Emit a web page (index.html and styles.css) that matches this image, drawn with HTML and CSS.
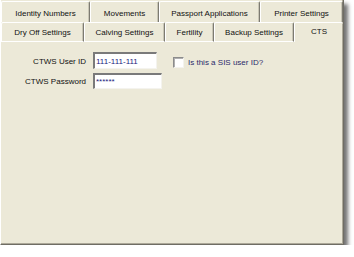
FILE: index.html
```html
<!DOCTYPE html>
<html lang="en">
<head>
    <meta charset="UTF-8">
    <meta name="viewport" content="width=device-width, initial-scale=1.0">
    <title>CTS Settings</title>
    <link rel="stylesheet" href="styles.css">
</head>
<body>
    <div class="window">
        <div class="tab-row back">
            <div class="tab tab-identity">Identity Numbers</div>
            <div class="tab tab-movements">Movements</div>
            <div class="tab tab-passport">Passport Applications</div>
            <div class="tab tab-printer">Printer Settings</div>
        </div>
        <div class="tab-row front">
            <div class="tab tab-dryoff">Dry Off Settings</div>
            <div class="tab tab-calving">Calving Settings</div>
            <div class="tab tab-fertility">Fertility</div>
            <div class="tab tab-backup">Backup Settings</div>
            <div class="tab tab-cts active">CTS</div>
        </div>

        <div class="tab-content">
            <label class="field-label" for="userId">CTWS User ID</label>
            <input class="field user-id" type="text" id="userId" value="111-111-111">
            <div class="check-group">
                <span class="checkbox"></span>
                <span class="check-label">Is this a SIS user ID?</span>
            </div>

            <label class="field-label" for="password">CTWS Password</label>
            <input class="field password" type="text" id="password" value="******">
        </div>
    </div>
</body>
</html>
```

FILE: styles.css
```css
body {
    margin: 0;
    background-color: #fff;
    font-family: "Liberation Sans", Arial, sans-serif;
    font-size: 8px;
    color: #111;
}
.window {
    width: 342px;
    height: 244px;
    background-color: #ece9d8;
    border-left: 1px solid #fff;
    border-right: 1px solid #6f6d64;
    border-bottom: 1px solid #6f6d64;
    box-shadow: inset -1px -1px #aca899, 4px 4px 4px rgba(0, 0, 0, 0.55);
}
.tab-row {
    display: flex;
}
.tab-row.back {
    height: 22px;
    padding-top: 1px;
    box-sizing: border-box;
}
.tab-row.front {
    height: 20px;
}
.tab {
    box-sizing: border-box;
    display: flex;
    align-items: center;
    justify-content: center;
    border-top: 1px solid #fff;
    border-left: 1px solid #fff;
    border-right: 1px solid #7d7b72;
    box-shadow: inset -1px 0 #c9c6b6;
    border-radius: 2px 2px 0 0;
    white-space: nowrap;
}
.back .tab {
    padding-top: 3px;
}
.front .tab {
    padding-top: 1px;
    border-bottom: 1px solid #fff;
}
.front .tab.active {
    border-bottom: none;
    border-right: none;
    box-shadow: none;
    padding-top: 0;
    padding-bottom: 2px;
}
.tab-identity { width: 89px; }
.tab-movements { width: 69px; }
.tab-passport { width: 101px; }
.tab-printer { width: 83px; }
.tab-dryoff { width: 83px; }
.tab-calving { width: 81px; }
.tab-fertility { width: 49px; }
.tab-backup { width: 80px; }
.tab-cts { width: 49px; }

.tab-content {
    display: grid;
    grid-template-columns: 85px 69px auto;
    column-gap: 7px;
    row-gap: 4px;
    padding-top: 10px;
    align-items: center;
}
.field-label {
    text-align: right;
    padding-top: 1px;
    white-space: nowrap;
}
.field {
    box-sizing: border-box;
    height: 16px;
    margin: 0;
    padding: 0 0 0 1px;
    font-family: "Liberation Sans", Arial, sans-serif;
    font-size: 8px;
    color: #23237d;
    background-color: #fff;
    border-style: solid;
    border-width: 2px 1px 1px 2px;
    border-color: #7a7a7a #f4f3ee #f4f3ee #7a7a7a;
    outline: none;
    justify-self: start;
}
.user-id {
    width: 64px;
    height: 17px;
}
.password {
    width: 69px;
}
.check-group {
    display: flex;
    align-items: center;
    gap: 4px;
    margin-left: 4px;
    margin-top: 4px;
}
.checkbox {
    box-sizing: border-box;
    width: 11px;
    height: 11px;
    background-color: #fff;
    border: 1px solid;
    border-color: #8c8c8c #f4f3ee #f4f3ee #8c8c8c;
    box-shadow: inset 1px 1px #b0b0b0;
}
.check-label {
    color: #2b2b6b;
    white-space: nowrap;
}
```
